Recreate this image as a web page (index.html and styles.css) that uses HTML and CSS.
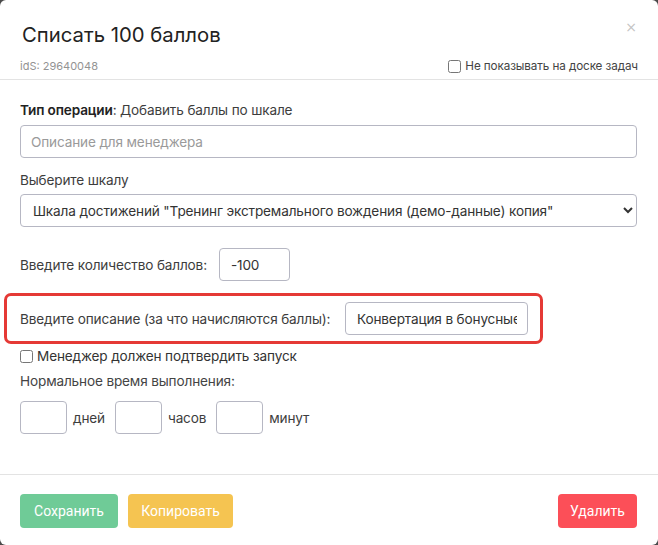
FILE: index.html
```html
<!DOCTYPE html>
<html lang="ru">
<head>
<meta charset="utf-8">
<title>Списать 100 баллов</title>
<link rel="stylesheet" href="styles.css">
</head>
<body>
<div class="modal">
  <div class="header">
    <h1 class="title">Списать 100 баллов</h1>
    <div class="meta-row">
      <span class="ids">idS: 29640048</span>
      <label class="check check-small"><input type="checkbox"> Не показывать на доске задач</label>
    </div>
    <button class="close" type="button">×</button>
  </div>
  <div class="body">
    <div class="line"><b>Тип операции</b>: Добавить баллы по шкале</div>
    <input class="field full" type="text" placeholder="Описание для менеджера">
    <div class="line label-gap">Выберите шкалу</div>
    <select class="field full select">
      <option>Шкала достижений "Тренинг экстремального вождения (демо-данные) копия"</option>
    </select>
    <div class="inline-row qty">
      <span>Введите количество баллов:</span>
      <input class="field qty-input" type="text" value="-100">
    </div>
    <div class="highlight">
      <span class="hl-label">Введите описание (за что начисляются баллы):</span>
      <input class="field desc-input" type="text" value="Конвертация в бонусные баллы">
    </div>
    <label class="check line confirm"><input type="checkbox"> Менеджер должен подтвердить запуск</label>
    <div class="line time-label">Нормальное время выполнения:</div>
    <div class="time-row">
      <input class="field small" type="text"><span>дней</span>
      <input class="field small" type="text"><span>часов</span>
      <input class="field small" type="text"><span>минут</span>
    </div>
  </div>
  <div class="footer">
    <button class="btn green" type="button">Сохранить</button>
    <button class="btn yellow" type="button">Копировать</button>
    <span class="spacer"></span>
    <button class="btn red" type="button">Удалить</button>
  </div>
</div>
</body>
</html>
```
FILE: styles.css
```css
* { box-sizing: border-box; }
html, body { margin: 0; padding: 0; }
body {
  background: #4a4a4a;
  font-family: Inter, "Noto Sans", "DejaVu Sans", sans-serif;
  color: #3d3d3d;
  width: 658px;
  height: 545px;
  overflow: hidden;
}
.modal {
  position: relative;
  background: #fff;
  width: 658px;
  height: 545px;
  border-radius: 6px;
}
.header {
  padding: 22px 20px 0 22px;
  height: 80px;
  border-bottom: 1px solid #e3e3e3;
}
.title {
  margin: 0;
  font-weight: 400;
  font-size: 20.3px;
  line-height: 26px;
  color: #222;
}
.meta-row {
  display: flex;
  justify-content: space-between;
  align-items: center;
  height: 20px;
  margin-top: 8px;
}
.ids { font-size: 11px; color: #939393; margin-left: -2px; }
.check { display: flex; align-items: center; gap: 4px; }
.check input {
  margin: 0;
  width: 13px;
  height: 13px;
}
.check-small { font-size: 11.7px; color: #444; margin-right: 0; letter-spacing: -0.1px; }
.close {
  position: absolute;
  top: 19px;
  right: 21px;
  background: none;
  border: 0;
  padding: 0;
  font-size: 14px;
  color: #c4c4c4;
  font-family: "DejaVu Sans", sans-serif;
  cursor: pointer;
}
.body {
  padding: 20px 21px 0 20px;
  height: 395px;
  border-bottom: 1px solid #e3e3e3;
  font-size: 13.6px;
  letter-spacing: -0.15px;
}
.line { line-height: 20px; height: 20px; }
.line b { font-weight: 600; color: #222; }
.field {
  font-family: inherit;
  font-size: 13.6px;
  letter-spacing: -0.15px;
  color: #333;
  border: 1px solid #b6b7c3;
  border-radius: 4px;
  height: 33px;
  padding: 0 10px;
  background: #fff;
  outline: none;
}
.field::placeholder { color: #9a9a9a; }
.full { display: block; width: 617px; margin-top: 5px; }
.label-gap { margin-top: 12px; }
.select { margin-top: 4px; padding-left: 8px; color: #333; }
.inline-row { display: flex; align-items: center; gap: 12px; }
.qty { margin-top: 21px; }
.qty-input { width: 71px; padding-left: 11px; }
.highlight {
  display: flex;
  align-items: center;
  gap: 10px;
  margin-top: 12px;
  margin-left: -16px;
  width: 539px;
  height: 51px;
  border: 3px solid #e53935;
  border-radius: 7px;
  padding: 0 12px 0 13px;
}
.hl-label { white-space: nowrap; flex: 1; }
.desc-input { width: 183px; flex-shrink: 0; padding-left: 11px; }
.confirm { margin-top: 2px; color: #333; gap: 4px; }
.time-label { margin-top: 5px; color: #444; }
.time-row {
  display: flex;
  align-items: center;
  margin-top: 10px;
}
.small { width: 47px; padding: 0 6px; }
.time-row span { margin: 0 10px 0 6px; }
.footer {
  display: flex;
  align-items: center;
  padding: 19px 21px 0 20px;
  gap: 10px;
}
.spacer { flex: 1; }
.btn {
  height: 34px;
  border: 0;
  border-radius: 4px;
  color: #fff;
  font-family: Roboto, "Liberation Sans", sans-serif;
  font-size: 14px;
  padding: 0 12px;
  cursor: pointer;
}
.green { background: #6fcb97; width: 98px; }
.yellow { background: #f5c451; width: 105px; }
.red { background: #fc4f58; width: 79px; }
```
